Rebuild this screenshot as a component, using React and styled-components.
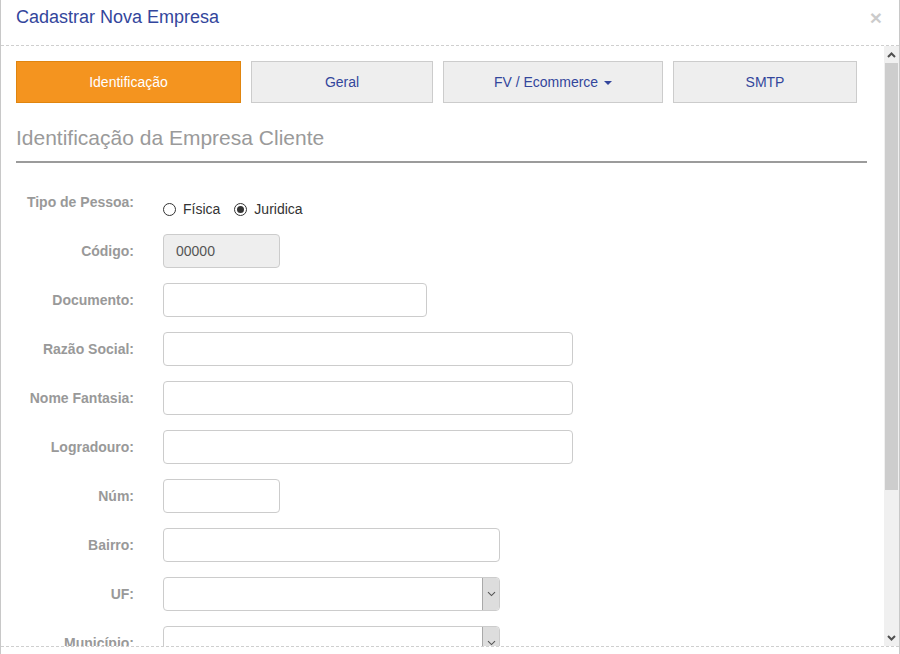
import React from 'react';
import styled, { createGlobalStyle } from 'styled-components';

const GlobalStyle = createGlobalStyle`
    html, body {
        margin: 0;
        padding: 0;
        height: 100%;
        overflow: hidden;
        background: #fff;
        font-family: "Liberation Sans", Arial, sans-serif;
    }
    * { box-sizing: border-box; }
`;

const Modal = styled.div`
    width: 900px;
    height: 700px;
    border-left: 1px solid #c8c8c8;
    border-right: 1px solid #c8c8c8;
    background: #fff;
    display: flex;
    flex-direction: column;
`;

const Header = styled.div`
    height: 46px;
    padding: 5px 17px 0 15px;
    border-bottom: 1px dashed #cfcfcf;
    display: flex;
    justify-content: space-between;
    align-items: flex-start;
    flex: none;
`;

const Title = styled.h4`
    margin: 0;
    font-size: 18px;
    line-height: 25px;
    font-weight: normal;
    color: #33469c;
`;

const Close = styled.button`
    border: 0;
    background: none;
    padding: 0;
    margin-top: 2px;
    font-family: "Liberation Sans", Arial, sans-serif;
    font-size: 21px;
    line-height: 1;
    font-weight: bold;
    color: #000;
    opacity: 0.2;
    cursor: pointer;
`;

const BodyWrap = styled.div`
    height: 600px;
    flex: none;
    display: flex;
`;

const Body = styled.div`
    flex: 1;
    overflow: hidden;
    padding: 15px 17px 15px 15px;
`;

const Scrollbar = styled.div`
    width: 15px;
    background: #f0f0f0;
    display: flex;
    flex-direction: column;
`;

const ScrollButton = styled.div`
    height: 17px;
    display: flex;
    align-items: center;
    justify-content: center;
`;

const ScrollThumb = styled.div`
    height: 427px;
    margin: 0 1px;
    background: #cdcdcd;
`;

const ScrollTrack = styled.div`
    flex: 1;
`;

const Footer = styled.div`
    flex: 1;
    border-top: 1px dashed #cfcfcf;
`;

const Tabs = styled.div`
    display: grid;
    grid-template-columns: 225px 182px 220px 184px;
    gap: 10px;
`;

const Tab = styled.div`
    height: 42px;
    display: flex;
    align-items: center;
    justify-content: center;
    gap: 6px;
    font-size: 14px;
    border: 1px solid ${p => (p.$active ? '#e0850f' : '#cccccc')};
    background: ${p => (p.$active ? '#f4941f' : '#eeeeee')};
    color: ${p => (p.$active ? '#ffffff' : '#33469c')};
    cursor: pointer;
`;

const Caret = styled.span`
    width: 0;
    height: 0;
    border-left: 4px solid transparent;
    border-right: 4px solid transparent;
    border-top: 4px solid #33469c;
    margin-top: 1px;
`;

const SectionTitle = styled.h3`
    margin: 23px 0 22px;
    padding-bottom: 12px;
    border-bottom: 2px solid #9b9b9b;
    font-size: 21px;
    line-height: 23px;
    font-weight: normal;
    color: #9a9a9a;
`;

const Form = styled.div`
    display: flex;
    flex-direction: column;
    gap: 15px;
`;

const Row = styled.div`
    display: grid;
    grid-template-columns: 118px 1fr;
    column-gap: 29px;
    min-height: 34px;
`;

const Label = styled.label`
    text-align: right;
    padding-top: 7px;
    font-size: 14px;
    line-height: 20px;
    font-weight: bold;
    color: #999999;
`;

const Input = styled.input`
    width: ${p => p.$w}px;
    height: 34px;
    padding: 6px 12px;
    border: 1px solid #cccccc;
    border-radius: 4px;
    font-family: "Liberation Sans", Arial, sans-serif;
    font-size: 14px;
    color: #555555;
    background: ${p => (p.readOnly ? '#eeeeee' : '#ffffff')};
    outline: none;
`;

const RadioGroup = styled.div`
    display: flex;
    align-items: center;
    gap: 14px;
    padding-top: 14px;
    font-size: 14px;
    line-height: 20px;
    color: #333333;
`;

const RadioOption = styled.label`
    display: flex;
    align-items: center;
    gap: 7px;
`;

const RadioDot = styled.span`
    width: 13px;
    height: 13px;
    border-radius: 50%;
    border: 1px solid #333333;
    display: flex;
    align-items: center;
    justify-content: center;
    &::after {
        content: '';
        width: 7px;
        height: 7px;
        border-radius: 50%;
        background: ${p => (p.$checked ? '#333333' : 'transparent')};
    }
`;

const SelectBox = styled.div`
    width: ${p => p.$w}px;
    height: 34px;
    border: 1px solid #cccccc;
    border-radius: 4px;
    display: flex;
    justify-content: flex-end;
    overflow: hidden;
`;

const SelectArrow = styled.span`
    width: 17px;
    background: #dddddd;
    border-left: 1px solid #a9a9a9;
    display: flex;
    align-items: center;
    justify-content: center;
`;

const Chevron = () => (
    <svg width="9" height="6" viewBox="0 0 9 6">
        <path d="M1 1.2 L4.5 4.6 L8 1.2" fill="none" stroke="#555" strokeWidth="1.1" />
    </svg>
);

const ArrowIcon = ({ up }) => (
    <svg width="9" height="6" viewBox="0 0 9 6">
        <path
            d={up ? 'M1 5 L4.5 1.5 L8 5' : 'M1 1 L4.5 4.5 L8 1'}
            fill="none"
            stroke="#505050"
            strokeWidth="2"
        />
    </svg>
);

const Select = ({ w }) => (
    <SelectBox $w={w}>
        <SelectArrow><Chevron /></SelectArrow>
    </SelectBox>
);

const fields = [
    { label: 'Código:', w: 117, value: '00000', readOnly: true },
    { label: 'Documento:', w: 264 },
    { label: 'Razão Social:', w: 410 },
    { label: 'Nome Fantasia:', w: 410 },
    { label: 'Logradouro:', w: 410 },
    { label: 'Núm:', w: 117 },
    { label: 'Bairro:', w: 337 },
    { label: 'UF:', w: 337, select: true },
    { label: 'Município:', w: 337, select: true },
    { label: 'CEP:', w: 180 },
    { label: 'Telefone:', w: 264 },
    { label: 'E-mail:', w: 410 },
];

export default function App() {
    return (
        <>
            <GlobalStyle />
            <Modal>
                <Header>
                    <Title>Cadastrar Nova Empresa</Title>
                    <Close>×</Close>
                </Header>
                <BodyWrap>
                    <Body>
                        <Tabs>
                            <Tab $active>Identificação</Tab>
                            <Tab>Geral</Tab>
                            <Tab>FV / Ecommerce <Caret /></Tab>
                            <Tab>SMTP</Tab>
                        </Tabs>
                        <SectionTitle>Identificação da Empresa Cliente</SectionTitle>
                        <Form>
                            <Row>
                                <Label>Tipo de Pessoa:</Label>
                                <RadioGroup>
                                    <RadioOption><RadioDot />Física</RadioOption>
                                    <RadioOption><RadioDot $checked />Juridica</RadioOption>
                                </RadioGroup>
                            </Row>
                            {fields.map(f => (
                                <Row key={f.label}>
                                    <Label>{f.label}</Label>
                                    {f.select ? (
                                        <Select w={f.w} />
                                    ) : (
                                        <Input $w={f.w} readOnly={f.readOnly} defaultValue={f.value} />
                                    )}
                                </Row>
                            ))}
                        </Form>
                    </Body>
                    <Scrollbar>
                        <ScrollButton><ArrowIcon up /></ScrollButton>
                        <ScrollThumb />
                        <ScrollTrack />
                        <ScrollButton><ArrowIcon /></ScrollButton>
                    </Scrollbar>
                </BodyWrap>
                <Footer />
            </Modal>
        </>
    );
}
